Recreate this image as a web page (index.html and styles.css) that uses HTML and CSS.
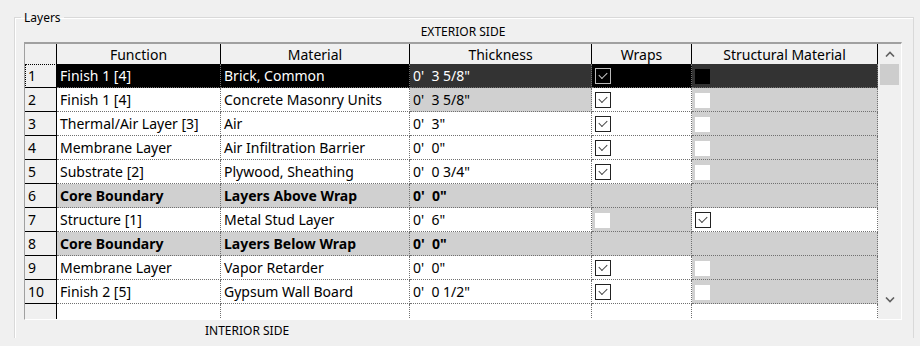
FILE: index.html
```html
<!DOCTYPE html>
<html lang="en">
<head>
  <meta charset="UTF-8">
  <title>Edit Assembly - Layers</title>
  <link rel="stylesheet" href="styles.css">
</head>
<body>
  <fieldset class="group">
    <legend>Layers</legend>
    <div class="side side-ext">EXTERIOR SIDE</div>

    <div class="grid">
      <table class="layers">
        <colgroup>
          <col class="c-num">
          <col class="c-func">
          <col class="c-mat">
          <col class="c-thk">
          <col class="c-wrap">
          <col class="c-struct">
        </colgroup>
        <thead>
          <tr>
            <th class="rh"></th>
            <th>Function</th>
            <th>Material</th>
            <th>Thickness</th>
            <th>Wraps</th>
            <th>Structural Material</th>
          </tr>
        </thead>
        <tbody>
          <tr class="sel">
            <td class="rh">1</td>
            <td>Finish 1 [4]</td>
            <td>Brick, Common</td>
            <td class="ro">0'&nbsp; 3 5/8"</td>
            <td><span class="cb on"></span></td>
            <td class="ro"><span class="cb dis"></span></td>
          </tr>
          <tr>
            <td class="rh">2</td>
            <td>Finish 1 [4]</td>
            <td>Concrete Masonry Units</td>
            <td class="ro">0'&nbsp; 3 5/8"</td>
            <td><span class="cb on"></span></td>
            <td class="ro"><span class="cb dis"></span></td>
          </tr>
          <tr>
            <td class="rh">3</td>
            <td>Thermal/Air Layer [3]</td>
            <td>Air</td>
            <td>0'&nbsp; 3"</td>
            <td><span class="cb on"></span></td>
            <td class="ro"><span class="cb dis"></span></td>
          </tr>
          <tr>
            <td class="rh">4</td>
            <td>Membrane Layer</td>
            <td>Air Infiltration Barrier</td>
            <td>0'&nbsp; 0"</td>
            <td><span class="cb on"></span></td>
            <td class="ro"><span class="cb dis"></span></td>
          </tr>
          <tr>
            <td class="rh">5</td>
            <td>Substrate [2]</td>
            <td>Plywood, Sheathing</td>
            <td>0'&nbsp; 0 3/4"</td>
            <td><span class="cb on"></span></td>
            <td class="ro"><span class="cb dis"></span></td>
          </tr>
          <tr class="core">
            <td class="rh">6</td>
            <td>Core Boundary</td>
            <td>Layers Above Wrap</td>
            <td>0'&nbsp; 0"</td>
            <td></td>
            <td></td>
          </tr>
          <tr>
            <td class="rh">7</td>
            <td>Structure [1]</td>
            <td>Metal Stud Layer</td>
            <td>0'&nbsp; 6"</td>
            <td class="ro"><span class="cb dis"></span></td>
            <td><span class="cb on"></span></td>
          </tr>
          <tr class="core">
            <td class="rh">8</td>
            <td>Core Boundary</td>
            <td>Layers Below Wrap</td>
            <td>0'&nbsp; 0"</td>
            <td></td>
            <td></td>
          </tr>
          <tr>
            <td class="rh">9</td>
            <td>Membrane Layer</td>
            <td>Vapor Retarder</td>
            <td>0'&nbsp; 0"</td>
            <td><span class="cb on"></span></td>
            <td class="ro"><span class="cb dis"></span></td>
          </tr>
          <tr>
            <td class="rh">10</td>
            <td>Finish 2 [5]</td>
            <td>Gypsum Wall Board</td>
            <td>0'&nbsp; 0 1/2"</td>
            <td><span class="cb on"></span></td>
            <td class="ro"><span class="cb dis"></span></td>
          </tr>
          <tr>
            <td class="rh"></td>
            <td></td>
            <td></td>
            <td></td>
            <td></td>
            <td></td>
          </tr>
        </tbody>
      </table>

      <!-- scrollbar -->
      <div class="vscroll">
        <div class="sbtn">
          <svg width="10" height="6" viewBox="0 0 10 6"><path d="M1 5.5 L5 1.5 L9 5.5" fill="none" stroke="#606060" stroke-width="1.6"/></svg>
        </div>
        <div class="thumb"></div>
        <div class="track"></div>
        <div class="sbtn">
          <svg width="10" height="6" viewBox="0 0 10 6"><path d="M1 0.5 L5 4.5 L9 0.5" fill="none" stroke="#606060" stroke-width="1.6"/></svg>
        </div>
      </div>
    </div>

    <div class="side side-int">INTERIOR SIDE</div>
  </fieldset>
</body>
</html>
```

FILE: styles.css
```css
body {
  margin: 0;
  width: 920px;
  height: 346px;
  overflow: hidden;
  background: #f0f0f0;
  font-family: 'Noto Sans', sans-serif;
  font-size: 12px;
  color: #000;
}

.group {
  margin: 9px 0 0 14px;
  padding: 0;
  width: 898px;
  height: 328px;
  border: 1px solid #d9d9d9;
  border-bottom: none;
  box-shadow: inset 1px 1px 0 #fff;
  box-sizing: content-box;
}

.group legend {
  margin-left: 6px;
  padding: 0 3px;
  line-height: 16px;
  position: relative;
  top: 1px;
}

.side {
  height: 17px;
  line-height: 13px;
}

.side-ext {
  text-align: center;
  width: 878px;
  margin-left: 9px;
}

.side-int {
  margin-left: 190px;
  margin-top: 4px;
}

/* grid */
.grid {
  display: flex;
  margin-left: 9px;
  width: 878px;
  height: 278px;
  box-sizing: border-box;
  border-top: 2px solid #a0a0a0;
  border-left: 1px solid #a0a0a0;
  border-right: 1px solid #fff;
  border-bottom: 1px solid #fff;
  overflow: hidden;
}

.layers {
  width: 853px;
  flex: none;
  table-layout: fixed;
  border-collapse: separate;
  border-spacing: 0;
  background: #fff;
  font-size: 14px;
  align-self: flex-start;
}

.c-num { width: 32px; }
.c-func { width: 164px; }
.c-mat { width: 189px; }
.c-thk { width: 182px; }
.c-wrap { width: 100px; }
.c-struct { width: 186px; }

.layers th {
  height: 20px;
  padding: 0;
  font-weight: normal;
  background: #f0f0f0;
  border-right: 1px solid #000;
  white-space: nowrap;
}

.layers tbody tr {
  height: 24px;
}

.layers td {
  padding: 0 0 0 3px;
  border-right: 1px dotted #707070;
  border-bottom: 1px dotted #707070;
  white-space: nowrap;
  overflow: hidden;
}

.layers td.rh {
  background: #f0f0f0;
  border-right: 1px solid #000;
  border-bottom: 1px solid #000;
  padding-left: 3px;
}

.layers td.ro,
.layers tr.core td {
  background: #d0d0d0;
}

.layers tr.core td {
  font-weight: bold;
}

.layers tr.core td.rh {
  font-weight: normal;
  background: #f0f0f0;
}

/* selected row */
.layers tr.sel td {
  background: #000;
  color: #fff;
}

.layers tr.sel td.ro {
  background: #333;
}

.layers tr.sel td.rh {
  background: #f0f0f0;
  color: #000;
  outline: 1px dotted #000;
  outline-offset: -1px;
}

/* checkboxes */
.cb {
  display: inline-block;
  width: 16px;
  height: 16px;
  box-sizing: border-box;
  border: 1px solid #222;
  background: #fff;
  vertical-align: middle;
  position: relative;
  top: -1px;
}

.cb.on::after {
  content: "";
  position: absolute;
  left: 3px;
  top: 3px;
  width: 7px;
  height: 4px;
  border-left: 1.5px solid #444;
  border-bottom: 1.5px solid #444;
  transform: rotate(-45deg);
}

.cb.dis {
  border-color: #fff;
  width: 15px;
  height: 15px;
}

.layers tr.sel .cb {
  background: #000;
  border-color: #bbb;
}

.layers tr.sel .cb.on::after {
  border-color: #ccc;
}

.layers tr.sel .cb.dis {
  border-color: #000;
}

/* scrollbar */
.vscroll {
  width: 23px;
  flex: none;
  display: flex;
  flex-direction: column;
  background: #f0f0f0;
}

.sbtn {
  height: 20px;
  display: flex;
  align-items: center;
  justify-content: center;
}

.vscroll .sbtn:last-child {
  height: 22px;
  align-items: flex-start;
}

.thumb {
  height: 21px;
  margin: 0 2px;
  background: #cdcdcd;
}

.track {
  flex: 1;
}
```
